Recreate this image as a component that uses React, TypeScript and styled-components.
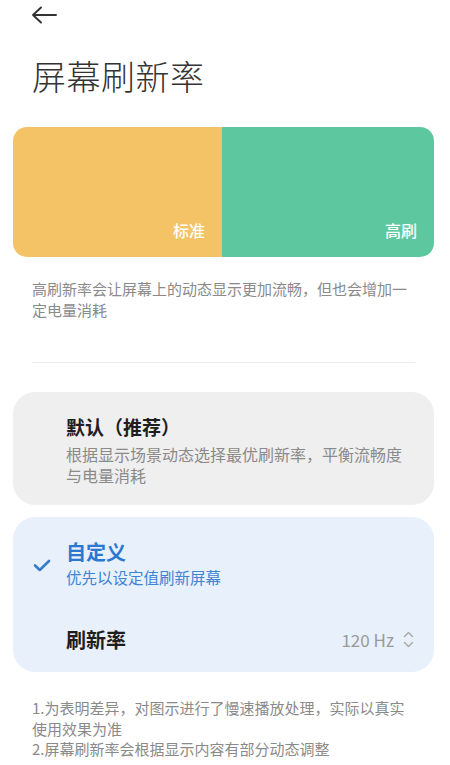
import React, { FC } from "react"
import styled, { createGlobalStyle } from "styled-components"

const GlobalStyle = createGlobalStyle`
  html, body {
    margin: 0;
    padding: 0;
    background: #ffffff;
  }
  body {
    font-family: "Noto Sans CJK SC", "Noto Sans", sans-serif;
    color: #222;
  }
`

const Page = styled.div`
  width: 450px;
  min-height: 765px;
  box-sizing: border-box;
  padding: 0 16px 0 13px;
  display: flex;
  flex-direction: column;
`

const TopBar = styled.div`
  height: 30px;
  display: flex;
  align-items: center;
  padding-left: 18px;
`

const BackButton = styled.button`
  border: 0;
  background: none;
  padding: 0;
  width: 26px;
  height: 18px;
  display: flex;
  align-items: center;
  cursor: pointer;
`

const Title = styled.h1`
  margin: 24px 0 0 19px;
  font-size: 34px;
  line-height: 44px;
  font-weight: 300;
  color: #333;
  letter-spacing: 0.5px;
`

const Preview = styled.div`
  margin-top: 29px;
  height: 130px;
  border-radius: 14px;
  overflow: hidden;
  display: grid;
  grid-template-columns: 209px 1fr;
`

const Half = styled.div<{ $color: string }>`
  background: ${p => p.$color};
  display: flex;
  align-items: flex-end;
  justify-content: flex-end;
  padding: 0 17px 16px 0;
  color: #fff;
  font-size: 16px;
  line-height: 22px;
  font-weight: 500;
`

const Note = styled.p<{ $top: number }>`
  margin: ${p => p.$top}px 0 0 19px;
  font-size: 15px;
  line-height: 21px;
  color: #8a8a8a;
  width: 380px;
`

const Divider = styled.hr`
  margin: 42px 19px 0 19px;
  border: 0;
  height: 1px;
  background: #ececec;
`

const Card = styled.div<{ $active?: boolean; $top: number }>`
  margin-top: ${p => p.$top}px;
  border-radius: 22px;
  background: ${p => (p.$active ? "#e8f0fb" : "#efefef")};
  padding: 22px 20px ${p => (p.$active ? 11 : 19)}px 20px;
`

const Option = styled.div`
  display: grid;
  grid-template-columns: 33px 1fr;
  align-items: center;
`

const CheckSlot = styled.div`
  display: flex;
  align-items: center;
  padding-top: 4px;
`

const OptionTitle = styled.div<{ $active?: boolean }>`
  font-size: ${p => (p.$active ? 20 : 19)}px;
  line-height: 26px;
  font-weight: 700;
  color: ${p => (p.$active ? "#2b78d2" : "#1e1e1e")};
`

const OptionDesc = styled.div<{ $active?: boolean }>`
  margin-top: ${p => (p.$active ? 2 : 4)}px;
  font-size: ${p => (p.$active ? 15.5 : 16)}px;
  line-height: 21px;
  color: ${p => (p.$active ? "#3d85d4" : "#8a8a8a")};
`

const RateRow = styled.div`
  margin-top: 29px;
  height: 44px;
  padding-left: 33px;
  display: flex;
  align-items: center;
  justify-content: space-between;
`

const RateLabel = styled.div`
  font-size: 20px;
  font-weight: 700;
  color: #1e1e1e;
`

const RateValue = styled.div`
  display: flex;
  align-items: center;
  gap: 9px;
  font-size: 17px;
  color: #9a9a9a;
`

const Footnotes = styled.div`
  margin: 26px 0 0 19px;
  font-size: 15px;
  line-height: 20.5px;
  color: #8a8a8a;
  width: 382px;
`

const BackIcon: FC = () => (
  <svg width="26" height="18" viewBox="0 0 26 18" fill="none">
    <path
      d="M2 9H25M10 1.5L2 9L10 16.5"
      stroke="#333"
      strokeWidth="1.9"
      strokeLinecap="round"
      strokeLinejoin="round"
    />
  </svg>
)

const CheckIcon: FC = () => (
  <svg width="18" height="13" viewBox="0 0 18 13" fill="none">
    <path
      d="M2 6.5L6.8 11L16 2"
      stroke="#3a7ccc"
      strokeWidth="2.6"
      strokeLinecap="round"
      strokeLinejoin="round"
    />
  </svg>
)

const UpDownIcon: FC = () => (
  <svg width="11" height="17" viewBox="0 0 11 17" fill="none">
    <path
      d="M1.5 5.5L5.5 1.5L9.5 5.5M1.5 11.5L5.5 15.5L9.5 11.5"
      stroke="#a8a8a8"
      strokeWidth="1.4"
      strokeLinecap="round"
      strokeLinejoin="round"
    />
  </svg>
)

const App: FC = () => (
  <>
    <GlobalStyle />
    <Page>
      <TopBar>
        <BackButton aria-label="返回">
          <BackIcon />
        </BackButton>
      </TopBar>

      <Title>屏幕刷新率</Title>

      <Preview>
        <Half $color="#f3c366">标准</Half>
        <Half $color="#5dc89f">高刷</Half>
      </Preview>

      <Note $top={21}>
        高刷新率会让屏幕上的动态显示更加流畅，但也会增加一定电量消耗
      </Note>

      <Divider />

      <Card $top={29}>
        <Option>
          <CheckSlot />
          <div>
            <OptionTitle>默认（推荐）</OptionTitle>
            <OptionDesc>根据显示场景动态选择最优刷新率，平衡流畅度与电量消耗</OptionDesc>
          </div>
        </Option>
      </Card>

      <Card $top={12} $active>
        <Option>
          <CheckSlot>
            <CheckIcon />
          </CheckSlot>
          <div>
            <OptionTitle $active>自定义</OptionTitle>
            <OptionDesc $active>优先以设定值刷新屏幕</OptionDesc>
          </div>
        </Option>

        <RateRow>
          <RateLabel>刷新率</RateLabel>
          <RateValue>
            120 Hz
            <UpDownIcon />
          </RateValue>
        </RateRow>
      </Card>

      <Footnotes>
        1.为表明差异，对图示进行了慢速播放处理，实际以真实使用效果为准
        <br />
        2.屏幕刷新率会根据显示内容有部分动态调整
      </Footnotes>
    </Page>
  </>
)

export default App
